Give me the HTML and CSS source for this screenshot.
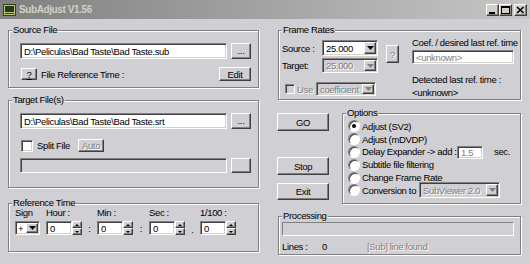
FILE: index.html
```html
<!DOCTYPE html>
<html lang="en">
<head>
  <meta charset="UTF-8">
  <title>SubAdjust V1.56</title>
  <link rel="stylesheet" href="styles.css">
</head>
<body>
  <div class="window">
    <div class="titlebar">
      <svg class="app-icon" width="13" height="12" viewBox="0 0 13 12" shape-rendering="crispEdges">
        <rect x="0.5" y="0.5" width="12" height="11" fill="#b9c27c" stroke="#3a3f18"/>
        <rect x="2" y="2" width="9" height="6" fill="#1f3b20"/>
        <rect x="2" y="9" width="9" height="1" fill="#3a3f18"/>
      </svg>
      <span class="title">SubAdjust V1.56</span>
      <div class="caption">
        <span class="cap-btn">
          <svg width="11" height="10" viewBox="0 0 11 10" shape-rendering="crispEdges"><rect x="2" y="7" width="6" height="2" fill="#000"/></svg>
        </span>
        <span class="cap-btn">
          <svg width="11" height="10" viewBox="0 0 11 10" shape-rendering="crispEdges"><rect x="1.5" y="1.5" width="8" height="7" fill="none" stroke="#000"/><rect x="1" y="1" width="9" height="2" fill="#000"/></svg>
        </span>
        <span class="cap-btn close">
          <svg width="11" height="10" viewBox="0 0 11 10"><path d="M2 2 L8.5 8 M8.5 2 L2 8" stroke="#000" stroke-width="1.6"/></svg>
        </span>
      </div>
    </div>

    <div class="client">
      <!-- left side: files and reference time -->
      <div class="col-left">
        <div class="group source">
          <div class="group-title">Source File</div>
          <div class="row file-row">
            <div class="edit path">D:\Peliculas\Bad Taste\Bad Taste.sub</div>
            <div class="btn browse">...</div>
          </div>
          <div class="row ref-row">
            <div class="btn help"><u>?</u></div>
            <span class="ref-label">File Reference Time :</span>
            <div class="btn edit-btn">Edit</div>
          </div>
        </div>

        <div class="group target">
          <div class="group-title">Target File(s)</div>
          <div class="row file-row">
            <div class="edit path">D:\Peliculas\Bad Taste\Bad Taste.srt</div>
            <div class="btn browse">...</div>
          </div>
          <div class="row split-row">
            <span class="check"></span>
            <span class="split-label">Split File</span>
            <div class="btn auto-btn disabled-text">Auto</div>
          </div>
          <div class="row split-path-row">
            <div class="edit path off"></div>
            <div class="btn browse"></div>
          </div>
        </div>

        <div class="group reftime">
          <div class="group-title">Reference Time</div>
          <div class="time-grid">
            <span class="tl c1">Sign</span>
            <span class="tl c3">Hour :</span>
            <span class="tl c5">Min :</span>
            <span class="tl c7">Sec :</span>
            <span class="tl c9">1/100 :</span>

            <div class="combo sign c1">
              <span class="combo-text">+</span>
              <span class="drop"><svg width="7" height="4" viewBox="0 0 7 4"><path d="M0 0 H7 L3.5 4 Z" fill="#000"/></svg></span>
            </div>
            <div class="spin c3">
              <div class="edit spin-edit">0</div>
              <div class="spin-btns"><span class="btn sb"><i class="up"></i></span><span class="btn sb"><i class="down"></i></span></div>
            </div>
            <span class="sep c4">:</span>
            <div class="spin c5">
              <div class="edit spin-edit">0</div>
              <div class="spin-btns"><span class="btn sb"><i class="up"></i></span><span class="btn sb"><i class="down"></i></span></div>
            </div>
            <span class="sep c6">:</span>
            <div class="spin c7">
              <div class="edit spin-edit">0</div>
              <div class="spin-btns"><span class="btn sb"><i class="up"></i></span><span class="btn sb"><i class="down"></i></span></div>
            </div>
            <span class="sep dot c8">.</span>
            <div class="spin c9">
              <div class="edit spin-edit">0</div>
              <div class="spin-btns"><span class="btn sb"><i class="up"></i></span><span class="btn sb"><i class="down"></i></span></div>
            </div>
          </div>
        </div>
      </div>

      <!-- right side: rates, commands, options, progress -->
      <div class="col-right">
        <div class="group frames">
          <div class="group-title">Frame Rates</div>
          <div class="frames-body">
            <div class="fr-left">
              <div class="fr-row r1">
                <span class="fr-label">Source :</span>
                <div class="combo rate">
                  <span class="combo-text">25.000</span>
                  <span class="drop"><svg width="7" height="4" viewBox="0 0 7 4"><path d="M0 0 H7 L3.5 4 Z" fill="#000"/></svg></span>
                </div>
              </div>
              <div class="fr-row r2">
                <span class="fr-label">Target:</span>
                <div class="combo rate off">
                  <span class="combo-text">25.000</span>
                  <span class="drop"><svg width="7" height="4" viewBox="0 0 7 4"><path d="M0 0 H7 L3.5 4 Z" fill="#808080"/></svg></span>
                </div>
              </div>
              <div class="fr-row r3">
                <span class="check small off"></span>
                <span class="use-label disabled-text">Use</span>
                <div class="combo coef off">
                  <span class="combo-text">coefficient</span>
                  <span class="drop"><svg width="7" height="4" viewBox="0 0 7 4"><path d="M0 0 H7 L3.5 4 Z" fill="#808080"/></svg></span>
                </div>
              </div>
            </div>
            <div class="btn qbtn disabled-text">?</div>
            <div class="fr-right">
              <div class="fr-text coef-text">Coef. / desired last ref. time</div>
              <div class="edit ro">&lt;unknown&gt;</div>
              <div class="fr-text detected">Detected last ref. time :</div>
              <div class="fr-text unknown">&lt;unknown&gt;</div>
            </div>
          </div>
        </div>

        <div class="mid-row">
          <div class="cmd-col">
            <div class="btn cmd go">GO</div>
            <div class="btn cmd stop">Stop</div>
            <div class="btn cmd exit">Exit</div>
          </div>
          <div class="group options">
            <div class="group-title">Options</div>
            <div class="opt-list">
              <div class="opt"><span class="radio checked"></span><span>Adjust (SV2)</span></div>
              <div class="opt"><span class="radio"></span><span>Adjust (mDVDP)</span></div>
              <div class="opt">
                <span class="radio"></span><span class="delay-label">Delay Expander -&gt; add :</span>
                <div class="edit delay">1.5</div>
                <span class="sec">sec.</span>
              </div>
              <div class="opt"><span class="radio"></span><span>Subtitle file filtering</span></div>
              <div class="opt"><span class="radio"></span><span>Change Frame Rate</span></div>
              <div class="opt">
                <span class="radio"></span><span class="conv-label">Conversion to</span>
                <div class="combo conv off">
                  <span class="combo-text">SubViewer 2.0</span>
                  <span class="drop"><svg width="7" height="4" viewBox="0 0 7 4"><path d="M0 0 H7 L3.5 4 Z" fill="#808080"/></svg></span>
                </div>
              </div>
            </div>
          </div>
        </div>

        <div class="group processing">
          <div class="group-title">Processing</div>
          <div class="progress"></div>
          <div class="lines-row">
            <span class="lines-label">Lines :</span>
            <span class="lines-count">0</span>
            <span class="disabled-text">[Sub] line found</span>
          </div>
        </div>
      </div>
    </div>
  </div>
</body>
</html>
```

FILE: styles.css
```css
* {
  box-sizing: border-box;
}
body {
  margin: 0;
  font-family: 'Liberation Sans', Arial, sans-serif;
  font-size: 9.5px;
  letter-spacing: -0.35px;
  color: #000;
  background: #d0cfd3;
}
.window {
  width: 530px;
  height: 264px;
  background: #d0cfd3;
  overflow: hidden;
}

/* Title bar (inactive window look) */
.titlebar {
  height: 19px;
  display: flex;
  align-items: center;
  padding: 0 3px;
  background: linear-gradient(to right, #808080, #c6c6c6);
}
.app-icon {
  flex: none;
}
.title {
  margin-left: 3px;
  color: #d4d0c8;
  font-size: 10px;
  font-weight: bold;
  letter-spacing: -0.4px;
}
.caption {
  margin-left: auto;
  display: flex;
}
.cap-btn {
  width: 13px;
  height: 12px;
  display: flex;
  align-items: center;
  justify-content: center;
  background: #d4d0c8;
  border: 1px solid;
  border-color: #fff #404040 #404040 #fff;
  box-shadow: inset -1px -1px 0 #808080;
}
.cap-btn.close {
  margin-left: 2px;
}

/* Client area */
.client {
  display: flex;
  padding: 11px 0 0 8px;
}
.col-left {
  width: 251px;
  display: flex;
  flex-direction: column;
}
.col-right {
  width: 244px;
  margin-left: 18px;
  display: flex;
  flex-direction: column;
}

/* Etched group box */
.group {
  --pad: 11px;
  border: 1px solid #808080;
  box-shadow: 1px 1px 0 #fff, inset 1px 1px 0 #fff;
}
.group-title {
  width: max-content;
  margin: -7px 0 0 calc(3px - var(--pad));
  padding: 0 1px;
  line-height: 12px;
  background: #d0cfd3;
}

/* 3D controls */
.btn {
  display: flex;
  align-items: center;
  justify-content: center;
  background: #d0cfd3;
  border: 1px solid;
  border-color: #fff #404040 #404040 #fff;
  box-shadow: inset -1px -1px 0 #808080;
}
.edit {
  display: flex;
  align-items: center;
  padding: 0 3px;
  white-space: nowrap;
  overflow: hidden;
  background: #fff;
  border: 1px solid;
  border-color: #808080 #fff #fff #808080;
  box-shadow: inset 1px 1px 0 #404040, inset -1px -1px 0 #d4d0c8;
}
.edit.off {
  background: #d0cfd3;
}
.combo {
  display: flex;
  align-items: stretch;
  padding: 1px;
  background: #fff;
  border: 1px solid;
  border-color: #808080 #fff #fff #808080;
  box-shadow: inset 1px 1px 0 #404040, inset -1px -1px 0 #d4d0c8;
}
.combo-text {
  flex: 1;
  display: flex;
  align-items: center;
  padding-left: 2px;
  white-space: nowrap;
  overflow: hidden;
}
.combo .drop {
  width: 12px;
  display: flex;
  align-items: center;
  justify-content: center;
  background: #d0cfd3;
  border: 1px solid;
  border-color: #fff #404040 #404040 #fff;
  box-shadow: inset -1px -1px 0 #808080;
}
.combo.off {
  background: #d0cfd3;
}
.combo.off .combo-text,
.disabled-text {
  color: #808080;
  text-shadow: 1px 1px 0 #fff;
}
.check {
  width: 12px;
  height: 12px;
  flex: none;
  background: #fff;
  border: 1px solid;
  border-color: #808080 #fff #fff #808080;
  box-shadow: inset 1px 1px 0 #404040, inset -1px -1px 0 #d4d0c8;
}
.check.small {
  width: 10px;
  height: 10px;
}
.check.off {
  background: #d0cfd3;
}
.radio {
  width: 12px;
  height: 12px;
  flex: none;
  margin-right: 2px;
  display: flex;
  align-items: center;
  justify-content: center;
  border-radius: 50%;
  background: #fff;
  border: 1px solid;
  border-color: #808080 #fff #fff #808080;
  box-shadow: inset 1px 1px 0 #404040;
}
.radio.checked::after {
  content: "";
  width: 4px;
  height: 4px;
  border-radius: 50%;
  background: #000;
}

/* Source / Target file groups */
.source,
.target {
  padding: 0 7px 6px var(--pad);
}
.row {
  display: flex;
  align-items: center;
}
.file-row {
  margin-top: 7px;
  height: 16px;
}
.path {
  width: 207px;
  height: 16px;
}
.browse {
  width: 20px;
  height: 16px;
  margin-left: 4px;
  line-height: 1;
}
.ref-row {
  margin-top: 8px;
  height: 14px;
}
.help {
  width: 16px;
  height: 12px;
  margin-left: 1px;
}
.ref-label {
  margin-left: 4px;
}
.edit-btn {
  width: 32px;
  height: 14px;
  margin-left: auto;
}
.target {
  margin-top: 12px;
  padding-bottom: 14px;
}
.split-row {
  margin-top: 10px;
  height: 13px;
}
.split-row .check {
  margin-left: 1px;
}
.split-label {
  width: 45px;
  padding-left: 4px;
}
.auto-btn {
  width: 26px;
  height: 13px;
}
.split-path-row {
  margin-top: 6px;
  height: 15px;
}
.split-path-row .path,
.split-path-row .browse {
  height: 15px;
}

/* Reference time */
.reftime {
  --pad: 6px;
  margin-top: 15px;
  padding: 0 6px 16px var(--pad);
}
.time-grid {
  margin-top: -2px;
  display: grid;
  grid-template-columns: 25px 6px 36px 15px 36px 16px 36px 15px 37px;
  grid-template-rows: 12px 14px;
  row-gap: 2px;
}
.tl {
  grid-row: 1;
  line-height: 12px;
}
.c1 { grid-column: 1; }
.c3 { grid-column: 3; }
.c4 { grid-column: 4; }
.c5 { grid-column: 5; }
.c6 { grid-column: 6; }
.c7 { grid-column: 7; }
.c8 { grid-column: 8; }
.c9 { grid-column: 9; }
.combo.sign,
.spin,
.sep {
  grid-row: 2;
}
.combo.sign .combo-text {
  padding-left: 1px;
}
.spin {
  display: flex;
}
.spin-edit {
  width: 26px;
  height: 14px;
}
.spin-btns {
  width: 10px;
  display: flex;
  flex-direction: column;
}
.sb {
  height: 7px;
}
.sb i {
  width: 0;
  height: 0;
  border-left: 2px solid transparent;
  border-right: 2px solid transparent;
}
.sb i.up {
  border-bottom: 2px solid #000;
}
.sb i.down {
  border-top: 2px solid #000;
}
.sep {
  display: flex;
  align-items: center;
  justify-content: center;
}
.sep.dot {
  align-items: flex-end;
}

/* Frame rates */
.frames {
  --pad: 3px;
  width: 243px;
  margin-left: 1px;
  padding: 0 5px 0 var(--pad);
}
.frames-body {
  display: flex;
  align-items: flex-start;
}
.fr-left {
  width: 96px;
  display: flex;
  flex-direction: column;
}
.fr-row {
  display: flex;
  align-items: center;
}
.fr-row.r1 {
  margin-top: 4px;
  height: 16px;
}
.fr-row.r2 {
  margin-top: 2px;
  height: 15px;
}
.fr-row.r3 {
  margin-top: 9px;
  height: 14px;
}
.fr-label {
  width: 40px;
}
.combo.rate {
  width: 56px;
  height: 100%;
}
.r3 .check {
  margin-left: 3px;
}
.use-label {
  width: 21px;
  padding-left: 2px;
}
.combo.coef {
  width: 60px;
  height: 14px;
}
.qbtn {
  width: 13px;
  height: 18px;
  margin: 9px 0 0 8px;
}
.fr-right {
  width: 103px;
  margin-left: 13px;
}
.fr-text {
  line-height: 12px;
  white-space: nowrap;
}
.coef-text {
  margin-top: 1px;
}
.edit.ro {
  margin-top: 1px;
  height: 14px;
  width: 102px;
  color: #808080;
}
.detected {
  margin-top: 10px;
}
.unknown {
  margin-top: 1px;
}

/* Command buttons and options */
.mid-row {
  display: flex;
  align-items: flex-start;
}
.cmd-col {
  width: 52px;
  padding-top: 13px;
  display: flex;
  flex-direction: column;
}
.cmd {
  height: 18px;
}
.cmd.stop {
  margin-top: 26px;
}
.cmd.exit {
  margin-top: 8px;
  height: 17px;
}
.options {
  --pad: 5px;
  width: 179px;
  margin: 13px 0 0 13px;
  padding: 0 4px 6px var(--pad);
}
.opt-list {
  margin-top: 1px;
  display: grid;
  grid-auto-rows: 12.8px;
}
.opt {
  display: flex;
  align-items: center;
  white-space: nowrap;
}
.delay-label {
  width: 95px;
}
.edit.delay {
  width: 26px;
  height: 13px;
  color: #808080;
}
.sec {
  margin-left: 11px;
}
.conv-label {
  width: 57px;
}
.combo.conv {
  width: 81px;
  height: 16px;
}

/* Processing */
.processing {
  --pad: 3px;
  width: 243px;
  margin: 12px 0 0 1px;
  padding: 0 5px 1px var(--pad);
}
.progress {
  width: 232px;
  height: 14px;
  border: 1px solid;
  border-color: #808080 #fff #fff #808080;
}
.lines-row {
  margin-top: 5px;
  display: flex;
  line-height: 12px;
}
.lines-label {
  width: 40px;
}
.lines-count {
  width: 45px;
}
```
